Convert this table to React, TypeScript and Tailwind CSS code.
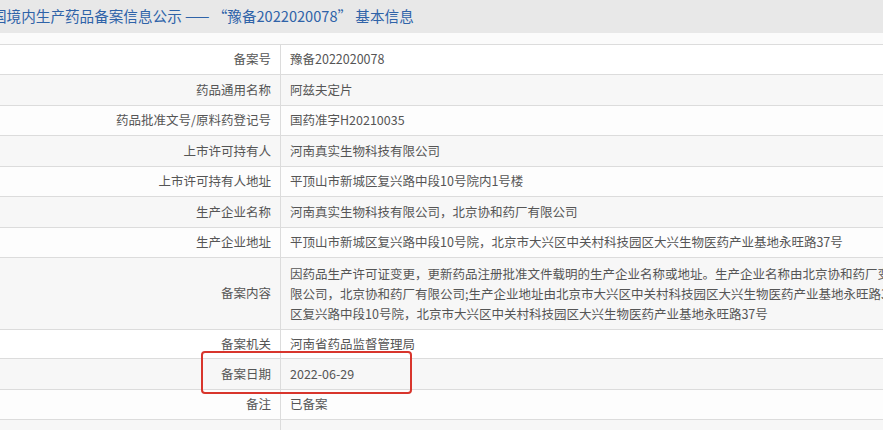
import React from "react";

type Row = { label: string; value: React.ReactNode; h: string; bg: string };

const font = { fontFamily: '"Noto Sans CJK SC", "Noto Sans", sans-serif' };

const rows: Row[] = [
  { label: "备案号", value: "豫备2022020078", h: "h-[30px]", bg: "bg-white" },
  { label: "药品通用名称", value: "阿兹夫定片", h: "h-[31px]", bg: "bg-[#f7f7f7]" },
  { label: "药品批准文号/原料药登记号", value: "国药准字H20210035", h: "h-[30px]", bg: "bg-[#fdfdfd]" },
  { label: "上市许可持有人", value: "河南真实生物科技有限公司", h: "h-[31px]", bg: "bg-[#f7f7f7]" },
  { label: "上市许可持有人地址", value: "平顶山市新城区复兴路中段10号院内1号楼", h: "h-[30px]", bg: "bg-[#fdfdfd]" },
  { label: "生产企业名称", value: "河南真实生物科技有限公司，北京协和药厂有限公司", h: "h-[31px]", bg: "bg-[#f7f7f7]" },
  {
    label: "生产企业地址",
    value: "平顶山市新城区复兴路中段10号院，北京市大兴区中关村科技园区大兴生物医药产业基地永旺路37号",
    h: "h-[30px]",
    bg: "bg-[#fdfdfd]",
  },
  {
    label: "备案内容",
    value: (
      <div className="flex flex-col leading-[20px]">
        <span className="whitespace-nowrap">
          因药品生产许可证变更，更新药品注册批准文件载明的生产企业名称或地址。生产企业名称由北京协和药厂变更为河南真实生物科技有
        </span>
        <span className="whitespace-nowrap">
          限公司，北京协和药厂有限公司;生产企业地址由北京市大兴区中关村科技园区大兴生物医药产业基地永旺路37号变更为平顶山市新城
        </span>
        <span className="whitespace-nowrap">
          区复兴路中段10号院，北京市大兴区中关村科技园区大兴生物医药产业基地永旺路37号
        </span>
      </div>
    ),
    h: "h-[72px]",
    bg: "bg-[#f7f7f7]",
  },
  { label: "备案机关", value: "河南省药品监督管理局", h: "h-[29px]", bg: "bg-white" },
  { label: "备案日期", value: "2022-06-29", h: "h-[31px]", bg: "bg-[#f7f7f7]" },
  { label: "备注", value: "已备案", h: "h-[30px]", bg: "bg-[#fdfdfd]" },
  { label: "", value: "", h: "h-[30px]", bg: "bg-[#f7f7f7]" },
];

export default function App() {
  return (
    <div className="relative w-[883px] h-[430px] overflow-hidden bg-white" style={font}>
      <div className="h-[33px] bg-[#e8e8e8] flex items-center">
        <span className="ml-[-8px] whitespace-nowrap text-[14.6px] text-[#2f63a8] leading-none">
          国境内生产药品备案信息公示 —— “豫备2022020078” 基本信息
        </span>
      </div>
      <div className="h-[11px] bg-[#fbfbfb]" />
      <div className="border-t border-[#dcdcdc] text-[12.5px] text-[#555]">
        {rows.map((r, i) => (
          <div key={i} className={`flex border-b border-[#dcdcdc] ${r.h} ${r.bg}`}>
            <div className="w-[281px] shrink-0 border-r border-[#dcdcdc] flex items-center justify-end pr-[9px] whitespace-nowrap">
              {r.label}
            </div>
            <div className="flex-1 min-w-0 flex items-center pl-[9px] overflow-hidden whitespace-nowrap">
              {r.value}
            </div>
          </div>
        ))}
      </div>
      <div className="absolute left-[201px] top-[351px] w-[211px] h-[43px] border-[2.5px] border-[#d8352c] rounded-[4px]" />
    </div>
  );
}
